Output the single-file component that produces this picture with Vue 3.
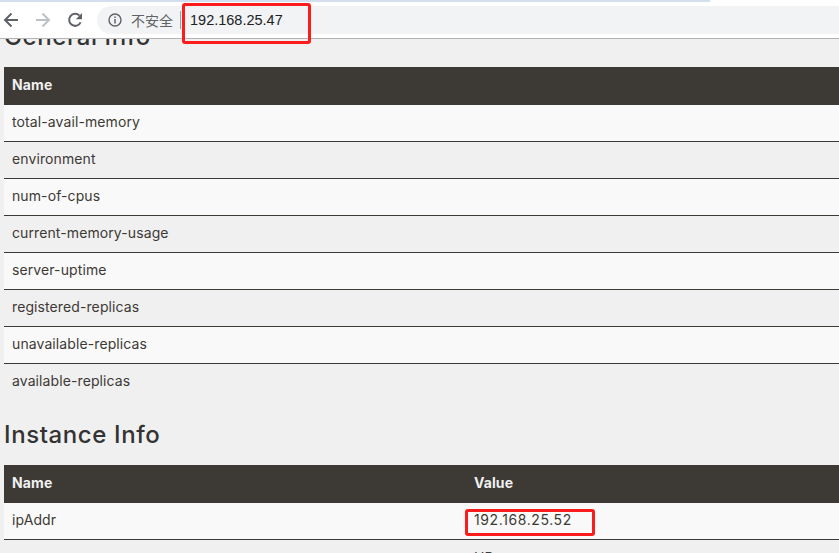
<template>
  <div class="page">
    <header class="toolbar">
      <div class="tab-strip"></div>
      <div class="nav">
        <svg class="nav-icon" viewBox="0 0 16 16">
          <path d="M15 8H2.5M8.5 1.5 2 8l6.5 6.5" fill="none" stroke="#5f6368" stroke-width="2" />
        </svg>
        <svg class="nav-icon" viewBox="0 0 16 16">
          <path d="M1 8h12.5M7.5 1.5 14 8l-6.5 6.5" fill="none" stroke="#bdc1c6" stroke-width="2" />
        </svg>
        <svg class="nav-icon" viewBox="0 0 16 16">
          <path d="M13.6 10.4A6 6 0 1 1 12.4 3.6" fill="none" stroke="#5f6368" stroke-width="2" />
          <path d="M15 1v6.2H8.8z" fill="#5f6368" />
        </svg>
      </div>
      <div class="omnibox">
        <svg class="info-icon" viewBox="0 0 14 14">
          <circle cx="7" cy="7" r="6" fill="none" stroke="#5f6368" stroke-width="1.4" />
          <path d="M7 6v4.4M7 3.4V5" stroke="#5f6368" stroke-width="1.5" />
        </svg>
        <span class="insecure">不安全</span>
        <span class="divider"></span>
        <span class="url">192.168.25.47</span>
      </div>
      <div class="mark mark-url"></div>
    </header>

    <main class="content">
      <h2 class="clipped">General Info</h2>
      <table>
        <thead>
          <tr><th>Name</th></tr>
        </thead>
        <tbody>
          <tr v-for="name in generalInfo" :key="name">
            <td>{{ name }}</td>
          </tr>
        </tbody>
      </table>

      <h2>Instance Info</h2>
      <table class="two-col">
        <thead>
          <tr><th>Name</th><th>Value</th></tr>
        </thead>
        <tbody>
          <tr>
            <td>ipAddr</td>
            <td class="marked"><span class="mark mark-ip"></span>192.168.25.52</td>
          </tr>
          <tr class="status-row">
            <td>status</td>
            <td>UP</td>
          </tr>
        </tbody>
      </table>
    </main>
  </div>
</template>

<script setup>
const generalInfo = [
  'total-avail-memory',
  'environment',
  'num-of-cpus',
  'current-memory-usage',
  'server-uptime',
  'registered-replicas',
  'unavailable-replicas',
  'available-replicas',
]
</script>

<style>
html,
body {
  margin: 0;
  overflow: hidden;
}
</style>

<style scoped>
.page {
  width: 839px;
  height: 553px;
  overflow: hidden;
  background: #f0f0f0;
  font-family: "Inter", "Noto Sans", sans-serif;
  color: #3d3935;
}

.toolbar {
  position: relative;
  z-index: 2;
  height: 39px;
  display: flex;
  align-items: flex-start;
  background: #fff;
  border-bottom: 1px solid #b4b4b4;
  padding-top: 6px;
  box-sizing: border-box;
}

.tab-strip {
  position: absolute;
  top: 0;
  left: 0;
  width: 710px;
  height: 2px;
  background: #d3dfee;
}

.nav {
  display: flex;
  gap: 16px;
  padding: 6px 0 0 3px;
}

.nav-icon {
  width: 16px;
  height: 16px;
}

.omnibox {
  flex: 1;
  height: 28px;
  margin-left: 14px;
  display: flex;
  align-items: center;
  padding-left: 11px;
  background: #f1f3f4;
  border-radius: 14px 0 0 14px;
}

.info-icon {
  width: 14px;
  height: 14px;
}

.insecure {
  margin-left: 9px;
  font: 14px "Noto Sans CJK SC", sans-serif;
  color: #5f6368;
}

.divider {
  width: 1px;
  height: 18px;
  margin: 0 9px 0 7px;
  background: #9aa0a6;
}

.url {
  font: 14.5px "Liberation Sans", sans-serif;
  color: #202124;
}

.mark {
  position: absolute;
  border: 3px solid #fb1c1c;
  border-radius: 3px;
  box-sizing: border-box;
}

.mark-url {
  left: 182px;
  top: 3px;
  width: 129px;
  height: 41px;
}

.mark-ip {
  left: -1px;
  top: 6px;
  width: 130px;
  height: 27px;
}

.content {
  padding: 0 0 0 4px;
}

h2 {
  margin: 17px 0 12px;
  font-size: 24px;
  font-weight: 500;
  letter-spacing: 0.6px;
  line-height: 36px;
  color: #333;
}

h2.clipped {
  margin: -20px 0 12px;
}

table {
  width: 900px;
  border-collapse: collapse;
  table-layout: fixed;
  font-size: 14px;
  letter-spacing: 0.1px;
}

th {
  height: 38px;
  padding: 0 8px 3px;
  box-sizing: border-box;
  text-align: left;
  font-weight: 700;
  color: #f0f0f0;
  background: #3d3935;
}

td {
  height: 33px;
  padding: 0 8px 3px;
  box-sizing: content-box;
  position: relative;
  border-bottom: 1px solid #3d3935;
}

tbody tr:nth-child(odd) td {
  background: #f9f9f9;
}

tbody tr:last-child td {
  border-bottom: none;
}

.status-row td {
  vertical-align: top;
  padding-top: 10px;
}

.status-row td + td {
  padding-top: 9px;
}

.two-col th:first-child {
  width: 462px;
}

.marked {
  letter-spacing: 0.6px;
}
</style>
